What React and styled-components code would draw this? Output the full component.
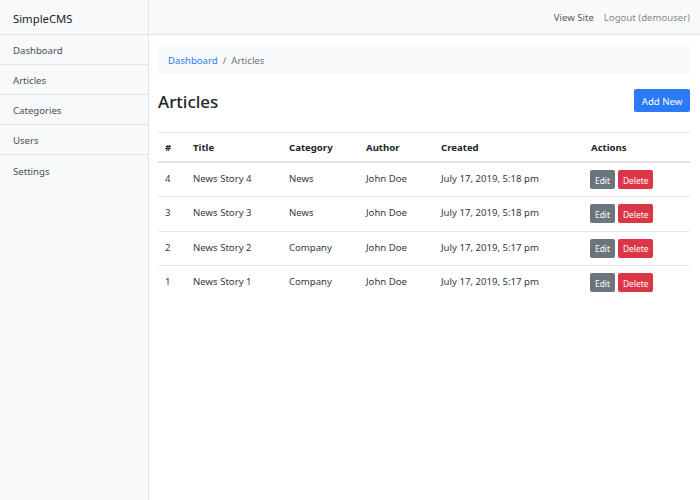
import React from "react";
import styled, { createGlobalStyle } from "styled-components";

const Global = createGlobalStyle`
  html, body { margin: 0; padding: 0; background: #fff; }
  body {
    font-family: "Noto Sans", "Open Sans", sans-serif;
    font-size: 9.6px;
    line-height: 1.5;
    color: #212529;
  }
  * { box-sizing: border-box; }
`;

const Shell = styled.div`
  display: flex;
  width: 700px;
  height: 500px;
`;

const Sidebar = styled.aside`
  width: 149px;
  flex-shrink: 0;
  background: #f8f9fa;
  border-right: 1px solid #e3e5e8;
  display: flex;
  flex-direction: column;
`;

const Brand = styled.div`
  height: 35px;
  display: flex;
  align-items: center;
  padding: 4px 0 0 13px;
  font-size: 11.3px;
  color: #212529;
  border-bottom: 1px solid #e3e5e8;
`;

const NavItem = styled.a`
  height: 30px;
  display: flex;
  align-items: center;
  padding: 4px 0 0 13px;
  color: #495057;
  text-decoration: none;
  border-bottom: 1px solid #e3e5e8;
  &:last-child { border-bottom: none; }
`;

const Main = styled.div`
  flex: 1;
  display: flex;
  flex-direction: column;
  min-width: 0;
`;

const TopBar = styled.header`
  height: 35px;
  background: #f8f9fa;
  border-bottom: 1px solid #e3e5e8;
  display: flex;
  align-items: center;
  justify-content: flex-end;
  gap: 10px;
  padding: 2px 10px 0 0;
`;

const TopLink = styled.a`
  color: ${(p) => (p.$muted ? "rgba(0,0,0,0.5)" : "rgba(0,0,0,0.7)")};
  text-decoration: none;
`;

const Content = styled.main`
  padding: 10px 10px 10px 9px;
  display: flex;
  flex-direction: column;
`;

const Breadcrumb = styled.nav`
  height: 29px;
  background: #f8f9fa;
  border-radius: 3px;
  display: flex;
  align-items: center;
  padding: 4px 0 0 10px;
  gap: 5px;
  color: #6c757d;
`;

const Crumb = styled.a`
  color: #2f7bf6;
  text-decoration: none;
`;

const HeadRow = styled.div`
  display: flex;
  align-items: center;
  justify-content: space-between;
  margin-top: 15px;
  height: 23px;
  margin-bottom: 20px;
`;

const Title = styled.h2`
  margin: 0;
  padding-top: 3px;
  font-size: 17px;
  font-weight: 500;
  line-height: 1.2;
`;

const PrimaryButton = styled.button`
  height: 23px;
  width: 56px;
  border: none;
  border-radius: 2px;
  background: #2b7bf7;
  color: #fff;
  font-family: inherit;
  font-size: 9.6px;
  padding: 2px 0 0;
`;

const Table = styled.table`
  width: 100%;
  border-collapse: collapse;
  table-layout: fixed;
`;

const Th = styled.th`
  text-align: left;
  font-weight: 700;
  padding: 8px 7px 6px;
  border-top: 1px solid #e6e8ea;
  border-bottom: 2px solid #e2e4e7;
  vertical-align: top;
`;

const Td = styled.td`
  padding: 9px 7px 5px;
  vertical-align: top;
  height: 34.4px;
  border-top: ${(p) => (p.$first ? "none" : "1px solid #e6e8ea")};
  color: #343a40;
`;

const Actions = styled.div`
  display: flex;
  gap: 3px;
  margin: -2px 0 0 -1px;
`;

const SmallButton = styled.button`
  height: 19px;
  padding: 1px 5px 0;
  border: none;
  border-radius: 2px;
  font-family: inherit;
  font-size: 8.4px;
  color: #fff;
  background: ${(p) => (p.$danger ? "#dc3545" : "#6c757d")};
`;

const rows = [
  { id: 4, title: "News Story 4", cat: "News", created: "July 17, 2019, 5:18 pm" },
  { id: 3, title: "News Story 3", cat: "News", created: "July 17, 2019, 5:18 pm" },
  { id: 2, title: "News Story 2", cat: "Company", created: "July 17, 2019, 5:17 pm" },
  { id: 1, title: "News Story 1", cat: "Company", created: "July 17, 2019, 5:17 pm" },
];

export default function App() {
  return (
    <>
      <Global />
      <Shell>
        <Sidebar>
          <Brand>SimpleCMS</Brand>
          {["Dashboard", "Articles", "Categories", "Users", "Settings"].map((n) => (
            <NavItem key={n} href="#">{n}</NavItem>
          ))}
        </Sidebar>
        <Main>
          <TopBar>
            <TopLink href="#">View Site</TopLink>
            <TopLink href="#" $muted>Logout (demouser)</TopLink>
          </TopBar>
          <Content>
            <Breadcrumb>
              <Crumb href="#">Dashboard</Crumb>
              <span>/</span>
              <span>Articles</span>
            </Breadcrumb>
            <HeadRow>
              <Title>Articles</Title>
              <PrimaryButton>Add New</PrimaryButton>
            </HeadRow>
            <Table>
              <colgroup>
                <col style={{ width: 28 }} />
                <col style={{ width: 96 }} />
                <col style={{ width: 77 }} />
                <col style={{ width: 75 }} />
                <col style={{ width: 150 }} />
                <col />
              </colgroup>
              <thead>
                <tr>
                  <Th>#</Th>
                  <Th>Title</Th>
                  <Th>Category</Th>
                  <Th>Author</Th>
                  <Th>Created</Th>
                  <Th>Actions</Th>
                </tr>
              </thead>
              <tbody>
                {rows.map((r, i) => (
                  <tr key={r.id}>
                    <Td $first={i === 0}>{r.id}</Td>
                    <Td $first={i === 0}>{r.title}</Td>
                    <Td $first={i === 0}>{r.cat}</Td>
                    <Td $first={i === 0}>John Doe</Td>
                    <Td $first={i === 0}>{r.created}</Td>
                    <Td $first={i === 0}>
                      <Actions>
                        <SmallButton>Edit</SmallButton>
                        <SmallButton $danger>Delete</SmallButton>
                      </Actions>
                    </Td>
                  </tr>
                ))}
              </tbody>
            </Table>
          </Content>
        </Main>
      </Shell>
    </>
  );
}
